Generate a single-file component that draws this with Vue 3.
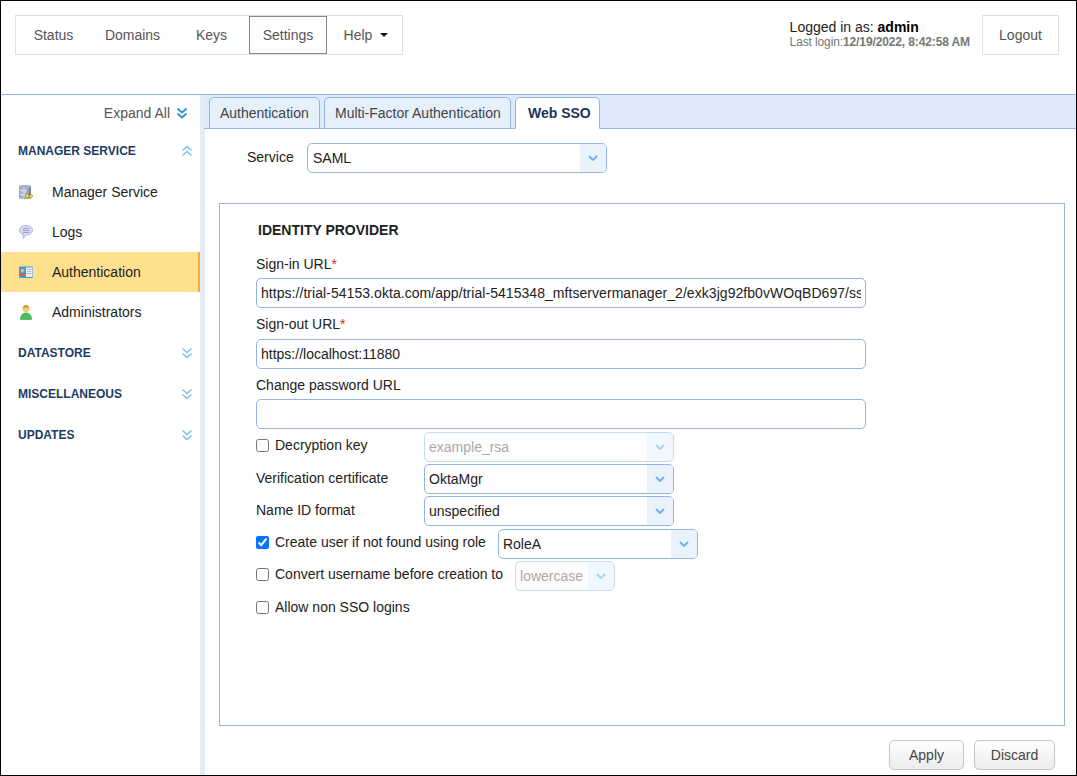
<script setup>
const navItems = [
  { label: 'Status', w: 75 },
  { label: 'Domains', w: 83 },
  { label: 'Keys', w: 75 },
  { label: 'Settings', w: 78, active: true },
]
const signIn = 'https://trial-54153.okta.com/app/trial-5415348_mftservermanager_2/exk3jg92fb0vWOqBD697/sso/saml'
</script>

<template>
  <div class="page">
    <header class="top">
      <nav class="nav">
        <a v-for="n in navItems" :key="n.label" class="nav-item" :class="{ active: n.active }" :style="{ width: n.w + 'px' }">{{ n.label }}</a>
        <a class="nav-item help">Help <span class="caret"></span></a>
      </nav>
      <div class="user">
        <div class="who">
          <div class="l1">Logged in as: <b>admin</b></div>
          <div class="l2">Last login:<b>12/19/2022, 8:42:58 AM</b></div>
        </div>
        <a class="logout">Logout</a>
      </div>
    </header>

    <div class="body">
      <aside class="side">
        <div class="expand">Expand All
          <svg class="chev strong" width="12" height="12" viewBox="0 0 12 12"><path d="M1.500 1.500 6 5.500l4.500-4M1.500 6.500 6 10.500l4.500-4" /></svg>
        </div>
        <div class="sec first">MANAGER SERVICE
          <svg class="chev" width="12" height="12" viewBox="0 0 12 12"><path d="M1.500 5.500 6 1.500l4.500 4M1.500 10.500 6 6.500l4.500 4" /></svg>
        </div>
        <a class="item">
          <svg class="ico" width="16" height="16" viewBox="0 0 16 16">
            <defs>
              <linearGradient id="cyl" x1="0" x2="1" y1="0" y2="0"><stop offset="0" stop-color="#8d9cc4" /><stop offset=".45" stop-color="#c3cde2" /><stop offset="1" stop-color="#6f7c9c" /></linearGradient>
            </defs>
            <path d="M1 2.500C1 1.500 3.500 1 7 1s6 .5 6 1.500v11c0 1-2.500 1.500-6 1.500s-6-.5-6-1.500Z" fill="url(#cyl)" />
            <ellipse cx="7" cy="2.600" rx="5.500" ry="1.500" fill="#aab2c4" />
            <path d="M1.500 6c2 1 4 1.200 7 1M1.500 10c2 1 3 1.200 5 1" stroke="#e4eaf6" fill="none" />
            <circle cx="9.200" cy="11.800" r="1.900" fill="#f4dc5c" stroke="#8e7c22" stroke-width=".7" />
            <circle cx="12.800" cy="12.200" r="1.700" fill="#f4dc5c" stroke="#8e7c22" stroke-width=".7" />
            <path d="m10.500 10.500 2.500-2.500" stroke="#8e7c22" stroke-width="1" />
            <path d="M6 15l2-2" stroke="#c8b040" stroke-width="1.200" />
          </svg>
          Manager Service
        </a>
        <a class="item">
          <svg class="ico" width="16" height="16" viewBox="0 0 16 16">
            <path d="M8 1.500c3.800 0 6.500 2 6.500 4.800S11.800 11 8.500 11L5 14.500l.5-3.900C3 10 1.500 8.500 1.500 6.300 1.500 3.500 4.200 1.500 8 1.500Z" fill="#dcdcf8" stroke="#aeb0e4" />
            <path d="M5 4.500h6M4.500 6.500h7M5 8.500h6" stroke="#9a9ad8" />
          </svg>
          Logs
        </a>
        <a class="item current">
          <svg class="ico" width="16" height="16" viewBox="0 0 16 16">
            <rect x="1" y="2.500" width="14" height="11.500" rx="1" fill="#4f96de" />
            <rect x="8" y="3.500" width="6.500" height="9.500" fill="#eef1f4" />
            <path d="M9 5.500h4.500M9 7.500h4.500M9 9.500h4.500" stroke="#b4bac2" />
            <circle cx="4.500" cy="6.500" r="1.800" fill="#f0b070" />
            <path d="M2 12c0-2 1-3 2.500-3S7 10 7 12Z" fill="#d8642c" />
          </svg>
          Authentication
        </a>
        <a class="item">
          <svg class="ico" width="16" height="16" viewBox="0 0 16 16">
            <path d="M2.500 15.500c0-4 1.800-6.500 5.500-6.500s5.500 2.500 5.500 6.500Z" fill="#4cbc5c" stroke="#3a9e4c" stroke-width=".6" />
            <circle cx="8" cy="4.800" r="3.400" fill="#f0c678" />
            <path d="M4.600 4.800C4.600 2.500 6 1 8 1s3.400 1.500 3.400 3.800C10.500 3.500 9 3 8 3.200S5.500 3.500 4.600 4.800Z" fill="#c99a2c" />
          </svg>
          Administrators
        </a>
        <div class="sec">DATASTORE
          <svg class="chev" width="12" height="12" viewBox="0 0 12 12"><path d="M1.500 1.500 6 5.500l4.500-4M1.500 6.500 6 10.500l4.500-4" /></svg>
        </div>
        <div class="sec">MISCELLANEOUS
          <svg class="chev" width="12" height="12" viewBox="0 0 12 12"><path d="M1.500 1.500 6 5.500l4.500-4M1.500 6.500 6 10.500l4.500-4" /></svg>
        </div>
        <div class="sec">UPDATES
          <svg class="chev" width="12" height="12" viewBox="0 0 12 12"><path d="M1.500 1.500 6 5.500l4.500-4M1.500 6.500 6 10.500l4.500-4" /></svg>
        </div>
      </aside>

      <main class="main">
        <div class="tabs">
          <a class="tab t1">Authentication</a>
          <a class="tab t2">Multi-Factor Authentication</a>
          <a class="tab t3 on">Web SSO</a>
        </div>
        <div class="content">
          <div class="service">
            <label>Service</label>
            <div class="sel svc"><span>SAML</span><i class="arr"><svg width="10" height="6" viewBox="0 0 10 6"><path d="M1 1l4 4 4-4" /></svg></i></div>
          </div>

          <section class="panel">
            <h3>IDENTITY PROVIDER</h3>
            <div class="lab lab1">Sign-in URL<em>*</em></div>
            <input class="inp long" readonly :value="signIn" />
            <div class="lab lab2">Sign-out URL<em>*</em></div>
            <input class="inp" readonly value="https://localhost:11880" />
            <div class="lab lab3">Change password URL</div>
            <input class="inp" readonly value="" />

            <div class="row r1">
              <label class="ck"><input type="checkbox" class="box" />Decryption key</label>
              <div class="sel dis w250"><span>example_rsa</span><i class="arr"><svg width="10" height="6" viewBox="0 0 10 6"><path d="M1 1l4 4 4-4" /></svg></i></div>
            </div>
            <div class="row r2">
              <label class="plain">Verification certificate</label>
              <div class="sel w250"><span>OktaMgr</span><i class="arr"><svg width="10" height="6" viewBox="0 0 10 6"><path d="M1 1l4 4 4-4" /></svg></i></div>
            </div>
            <div class="row r2">
              <label class="plain">Name ID format</label>
              <div class="sel w250"><span>unspecified</span><i class="arr"><svg width="10" height="6" viewBox="0 0 10 6"><path d="M1 1l4 4 4-4" /></svg></i></div>
            </div>
            <div class="row r3">
              <label class="ck nowrap"><input type="checkbox" class="box" checked />Create user if not found using role</label>
              <div class="sel w200"><span>RoleA</span><i class="arr"><svg width="10" height="6" viewBox="0 0 10 6"><path d="M1 1l4 4 4-4" /></svg></i></div>
            </div>
            <div class="row r4">
              <label class="ck nowrap"><input type="checkbox" class="box" />Convert username before creation to</label>
              <div class="sel dis w100"><span>lowercase</span><i class="arr"><svg width="10" height="6" viewBox="0 0 10 6"><path d="M1 1l4 4 4-4" /></svg></i></div>
            </div>
            <label class="ck last"><input type="checkbox" class="box" />Allow non SSO logins</label>
          </section>

          <div class="actions">
            <button class="btn apply">Apply</button>
            <button class="btn discard">Discard</button>
          </div>
        </div>
      </main>
    </div>
  </div>
</template>

<style>
html, body { margin: 0; padding: 0; background: #fff; }
</style>

<style scoped>
.page {
  width: 1077px; height: 776px; box-sizing: border-box; border: 1px solid #000;
  font: 14px/16px "Liberation Sans", Arial, sans-serif; color: #222; display: flex; flex-direction: column; overflow: hidden; background: #fff;
}
.top { height: 94px; box-sizing: border-box; border-bottom: 1px solid #8fb6e6; flex: none; display: flex; justify-content: space-between; align-items: flex-start; padding: 14px 17px 0 14px; }
.nav { display: flex; height: 40px; box-sizing: border-box; border: 1px solid #e0e0e0; width: 388px; }
.nav-item { display: flex; align-items: center; justify-content: center; color: #555; height: 38px; box-sizing: border-box; }
.nav-item.active { border: 1px solid #888; }
.help { flex: 1; gap: 6px; padding-left: 3px; }
.caret { display: inline-block; width: 0; height: 0; border-left: 4px solid transparent; border-right: 4px solid transparent; border-top: 4px solid #111; margin-left: 2px; }
.user { display: flex; align-items: flex-start; }
.who { margin-right: 12px; padding-top: 4px; }
.l1 { color: #222; line-height: 16px; }
.l1 b { color: #000; }
.l2 { font-size: 12px; line-height: 12px; color: #777; margin-top: 1px; letter-spacing: -.12px; }
.logout { width: 77px; height: 40px; box-sizing: border-box; border: 1px solid #e0e0e0; display: flex; align-items: center; justify-content: center; color: #555; }

.body { flex: 1; display: flex; min-height: 0; }
.side { width: 204px; flex: none; box-sizing: border-box; border-right: 5px solid #e3edf9; }
.expand { height: 35px; display: flex; align-items: center; justify-content: flex-end; gap: 6px; padding-right: 12px; color: #555; }
.chev { flex: none; }
.chev path { fill: none; stroke: #7cbcf0; stroke-width: 1.400; }
.chev.strong path { stroke: #2f8fe0; stroke-width: 1.700; }
.sec { height: 41px; display: flex; align-items: center; justify-content: space-between; padding: 0 7px 0 17px; font-size: 12px; font-weight: bold; color: #1d3c64; }
.sec.first { height: 42px; }
.item { display: flex; align-items: center; height: 40px; padding-left: 17px; color: #222; box-sizing: border-box; }
.ico { margin-right: 18px; flex: none; }
.item.current { background: #ffe08f; border-right: 2px solid #ffa53d; }

.main { flex: 1; min-width: 0; display: flex; flex-direction: column; }
.tabs { height: 34px; flex: none; box-sizing: border-box; background: #deeafc; border-bottom: 1px solid #8fb6e6; display: flex; align-items: flex-end; padding-left: 5px; gap: 4px; margin-left: -1px; }
.tab { height: 32px; box-sizing: border-box; margin-bottom: -1px; border: 1px solid #8fb6e6; border-radius: 5px 5px 0 0; background: #e6effc; display: flex; align-items: center; padding-left: 10px; color: #444; flex: none; }
.t1 { width: 111px; }
.t2 { width: 187px; }
.t3 { width: 85px; }
.tab.on { background: #fff; border-bottom-color: #fff; font-weight: bold; color: #1d3557; padding-left: 12px; }
.content { flex: 1; min-height: 0; padding: 0 11px 0 14px; display: flex; flex-direction: column; }
.service { display: flex; align-items: center; height: 30px; margin-top: 14px; flex: none; }
.service label { margin-left: 28px; width: 60px; color: #222; position: relative; top: -1px; }
.sel { height: 30px; box-sizing: border-box; border: 1px solid #8fb6e6; border-radius: 5px; display: flex; align-items: center; justify-content: space-between; background: #fff; color: #222; overflow: hidden; flex: none; }
.sel > span { padding-left: 4px; }
.svc { width: 300px; }
.svc > span { padding-left: 5px; }
.arr { width: 26px; align-self: stretch; background: #e9f2fd; display: flex; align-items: center; justify-content: center; }
.arr path { fill: none; stroke: #6cb0ee; stroke-width: 1.800; }
.sel.dis { border-color: #c5daf3; color: #aaa; background: #fdfdfd; }
.sel.dis .arr { background: #f1f7fe; }
.sel.dis .arr path { stroke: #a9d2f6; }
.w250 { width: 250px; }
.w200 { width: 200px; }
.w100 { width: 100px; }
.panel { margin-top: 30px; height: 523px; box-sizing: border-box; border: 1px solid #8fb6e6; padding: 0 0 0 36px; flex: none; }
h3 { margin: 18px 0 0 2px; font-size: 14px; line-height: 16px; font-weight: bold; color: #222; }
.lab { color: #222; height: 16px; }
.lab em { color: #d22; font-style: normal; }
.lab1 { margin-top: 18px; padding-bottom: 6px; }
.lab2 { margin-top: 8px; padding-bottom: 7px; }
.lab3 { margin-top: 8px; padding-bottom: 6px; }
.inp { display: block; width: 610px; height: 30px; box-sizing: border-box; border: 1px solid #8fb6e6; border-radius: 5px; padding: 0 4px; margin: 0; color: #222; font: 14px "Liberation Sans", Arial, sans-serif; outline: none; background: #fff; }
.inp.long { letter-spacing: .05px; }
.row { display: flex; align-items: flex-start; height: 30px; }
.r1 { margin-top: 3px; }
.r2 { margin-top: 2px; }
.r3 { margin-top: 3px; }
.r4 { margin-top: 2px; }
.ck { display: inline-flex; align-items: center; height: 16px; color: #222; }
.row .ck { margin-top: 5px; width: 168px; flex: none; }
.row .ck.nowrap { width: auto; white-space: nowrap; margin-right: 12px; }
.plain { width: 168px; flex: none; margin-top: 6px; }
.last { margin-top: 8px; }
.box { width: 13px; height: 13px; margin: 0 6px 0 0; flex: none; accent-color: #0075ff; }
.actions { display: flex; justify-content: flex-end; gap: 10px; margin-top: 14px; padding-right: 10px; flex: none; }
.btn { height: 30px; box-sizing: border-box; border: 1px solid #c4c4c4; border-radius: 5px; background: linear-gradient(#fff, #ececec); color: #444; font: 14px "Liberation Sans", Arial, sans-serif; padding: 0; }
.apply { width: 75px; }
.discard { width: 81px; }
</style>
